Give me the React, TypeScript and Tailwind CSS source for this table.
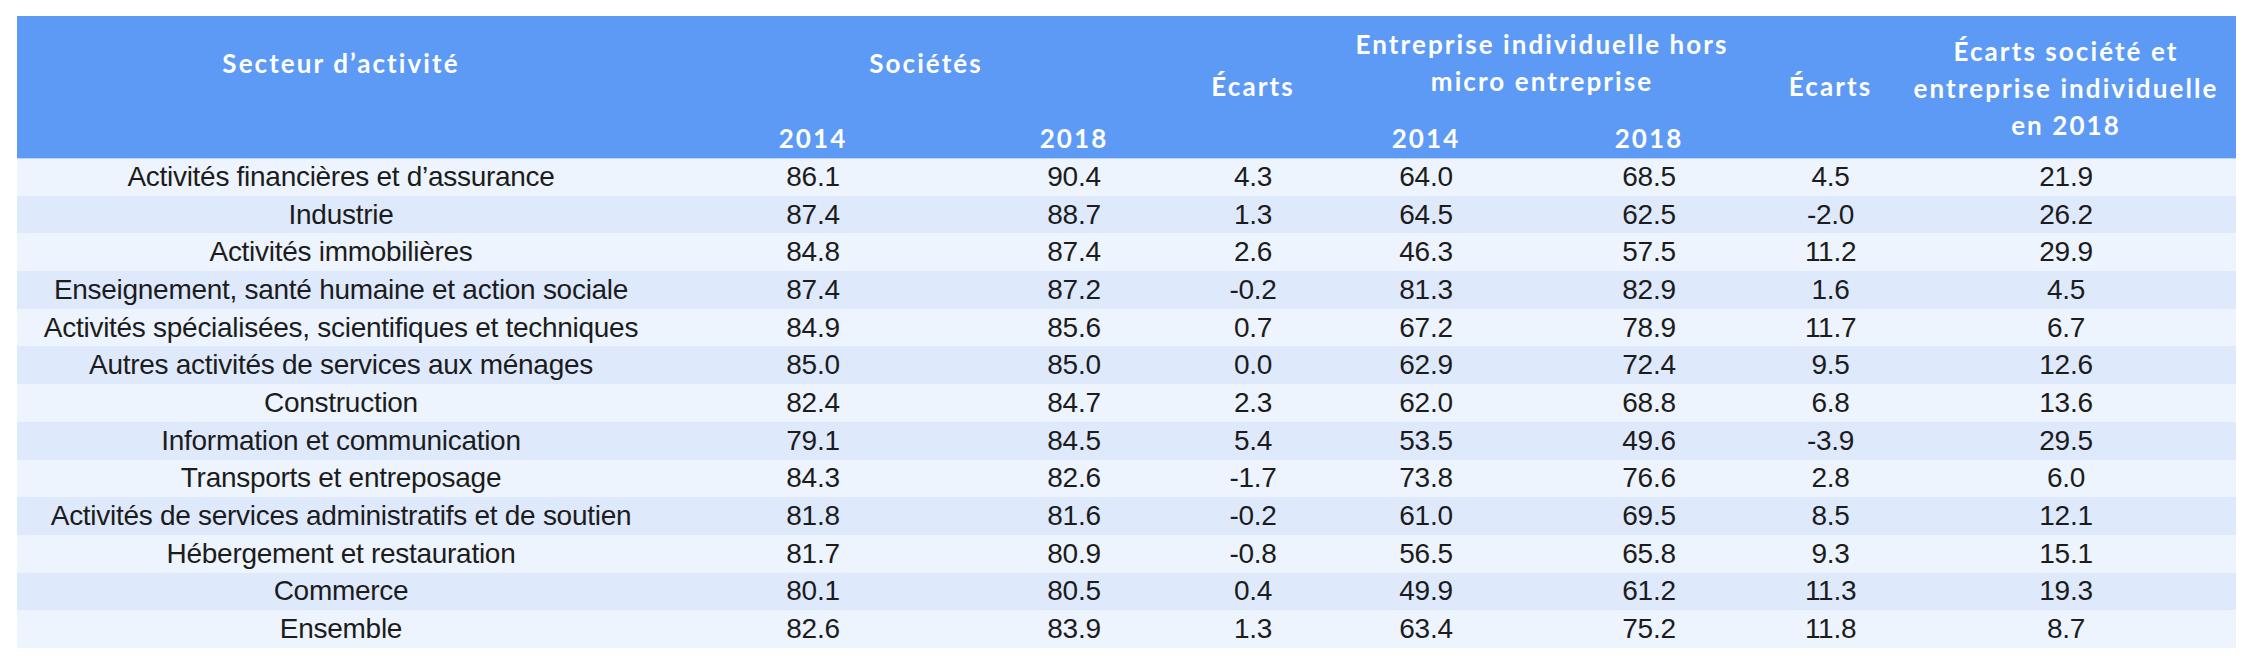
const rows: [string, string, string, string, string, string, string, string][] = [
  ['Activités financières et d’assurance', '86.1', '90.4', '4.3', '64.0', '68.5', '4.5', '21.9'],
  ['Industrie', '87.4', '88.7', '1.3', '64.5', '62.5', '-2.0', '26.2'],
  ['Activités immobilières', '84.8', '87.4', '2.6', '46.3', '57.5', '11.2', '29.9'],
  ['Enseignement, santé humaine et action sociale', '87.4', '87.2', '-0.2', '81.3', '82.9', '1.6', '4.5'],
  ['Activités spécialisées, scientifiques et techniques', '84.9', '85.6', '0.7', '67.2', '78.9', '11.7', '6.7'],
  ['Autres activités de services aux ménages', '85.0', '85.0', '0.0', '62.9', '72.4', '9.5', '12.6'],
  ['Construction', '82.4', '84.7', '2.3', '62.0', '68.8', '6.8', '13.6'],
  ['Information et communication', '79.1', '84.5', '5.4', '53.5', '49.6', '-3.9', '29.5'],
  ['Transports et entreposage', '84.3', '82.6', '-1.7', '73.8', '76.6', '2.8', '6.0'],
  ['Activités de services administratifs et de soutien', '81.8', '81.6', '-0.2', '61.0', '69.5', '8.5', '12.1'],
  ['Hébergement et restauration', '81.7', '80.9', '-0.8', '56.5', '65.8', '9.3', '15.1'],
  ['Commerce', '80.1', '80.5', '0.4', '49.9', '61.2', '11.3', '19.3'],
  ['Ensemble', '82.6', '83.9', '1.3', '63.4', '75.2', '11.8', '8.7'],
]

const head = "font-['Lato',sans-serif] font-bold text-[26px] tracking-[0.08em] text-white text-center align-middle leading-[37px] p-0"

export default function App() {
  return (
    <div className="min-h-screen bg-white pt-4 pl-[17px]">
      <table className="table-fixed border-collapse w-[2219px]">
        <colgroup>
          <col className="w-[648px]" />
          <col className="w-[296px]" />
          <col className="w-[226px]" />
          <col className="w-[132px]" />
          <col className="w-[214px]" />
          <col className="w-[232px]" />
          <col className="w-[131px]" />
          <col className="w-[340px]" />
        </colgroup>
        <thead className="bg-[#5c9af6]">
          <tr className="h-[100px]">
            <th className={`${head} pb-[6px]`}>Secteur d’activité</th>
            <th colSpan={2} className={`${head} pb-[6px]`}>Sociétés</th>
            <th rowSpan={2} className={head}>Écarts</th>
            <th colSpan={2} className={`${head} pb-[6px]`}>
              Entreprise individuelle hors
              <br />
              micro entreprise
            </th>
            <th rowSpan={2} className={head}>Écarts</th>
            <th rowSpan={2} className={`${head} pt-1`}>
              Écarts société et
              <br />
              entreprise individuelle
              <br />
              en 2018
            </th>
          </tr>
          <tr className="h-[42px] border-b border-[#b9d3fb]">
            <th className={head}></th>
            <th className={`${head} pt-[4px]`}>2014</th>
            <th className={`${head} pt-[4px]`}>2018</th>
            <th className={`${head} pt-[4px]`}>2014</th>
            <th className={`${head} pt-[4px]`}>2018</th>
          </tr>
        </thead>
        <tbody className="font-['Liberation_Sans',Arial,sans-serif] text-[28px] tracking-[-0.01em] text-[#1c1c1c]">
          {rows.map((r, i) => (
            <tr key={r[0]} className={`h-[37.7px] ${i % 2 === 0 ? 'bg-[#edf4fe]' : 'bg-[#dfe9fc]'}`}>
              {r.map((c, j) => (
                <td key={j} className="text-center align-middle leading-none p-0 whitespace-nowrap">
                  {c}
                </td>
              ))}
            </tr>
          ))}
        </tbody>
      </table>
    </div>
  )
}
